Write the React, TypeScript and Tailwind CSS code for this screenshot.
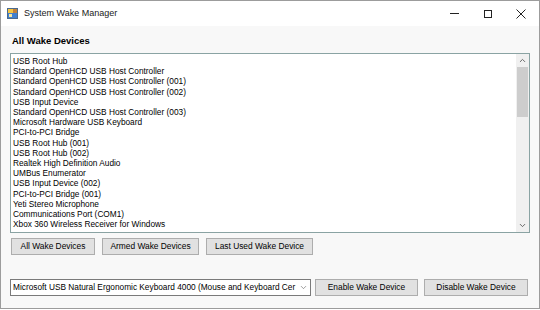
import { ChevronDown, ChevronUp } from "lucide-react";

const devices = [
  "USB Root Hub",
  "Standard OpenHCD USB Host Controller",
  "Standard OpenHCD USB Host Controller (001)",
  "Standard OpenHCD USB Host Controller (002)",
  "USB Input Device",
  "Standard OpenHCD USB Host Controller (003)",
  "Microsoft Hardware USB Keyboard",
  "PCI-to-PCI Bridge",
  "USB Root Hub (001)",
  "USB Root Hub (002)",
  "Realtek High Definition Audio",
  "UMBus Enumerator",
  "USB Input Device (002)",
  "PCI-to-PCI Bridge (001)",
  "Yeti Stereo Microphone",
  "Communications Port (COM1)",
  "Xbox 360 Wireless Receiver for Windows",
];

function Btn({ label, w }: { label: string; w: string }) {
  return (
    <button
      className={`${w} h-[17px] shrink-0 border border-[#adadad] bg-[#e1e1e1] text-[8.4px] leading-none text-black`}
    >
      {label}
    </button>
  );
}

function AppIcon() {
  return (
    <svg width="11" height="11" viewBox="0 0 11 11">
      <rect x="0.5" y="0.5" width="10" height="10" fill="#6a8fb8" stroke="#4a6a8e" />
      <rect x="1" y="1" width="5" height="4" fill="#f4c542" />
      <rect x="6" y="1" width="4" height="4" fill="#c0803a" />
      <rect x="1" y="5" width="9" height="5" fill="#3f7fd0" />
      <rect x="2" y="6" width="3" height="3" fill="#f6e7a0" />
    </svg>
  );
}

export default function App() {
  return (
    <div className="h-[310px] w-[540px] bg-white font-['Liberation_Sans',Arial,sans-serif] text-black">
      <div className="flex h-[309px] w-[540px] flex-col border border-[#9c9c9c] bg-white">
        {/* title bar */}
        <div className="flex h-[25px] shrink-0 items-center pl-[6px]">
          <AppIcon />
          <span className="ml-[6px] text-[9px] text-[#1a1a1a]">System Wake Manager</span>
          <div className="ml-auto flex items-center">
            <div className="flex w-[34px] justify-center">
              <div className="h-px w-[9px] bg-[#222]" />
            </div>
            <div className="flex w-[34px] justify-center">
              <div className="h-[8px] w-[8px] border border-[#222]" />
            </div>
            <div className="flex w-[34px] justify-center pr-[2px]">
              <svg width="10" height="10" viewBox="0 0 10 10">
                <path d="M0.5 0.5 L9.5 9.5 M9.5 0.5 L0.5 9.5" stroke="#222" strokeWidth="1" />
              </svg>
            </div>
          </div>
        </div>

        {/* client */}
        <div className="flex flex-1 flex-col bg-[#f8f8f8] px-[9px] pt-[9px]">
          <div className="pl-[2px] text-[9.5px] font-bold leading-[12px]">All Wake Devices</div>

          <div className="mt-[6px] flex h-[180px] border border-[#8aa3a3] bg-white">
            <div className="flex-1 overflow-hidden pl-[2px] pt-[2px]">
              {devices.map((d) => (
                <div key={d} className="whitespace-nowrap text-[8.3px] leading-[10.2px]">
                  {d}
                </div>
              ))}
            </div>
            <div className="flex w-[13px] flex-col bg-[#f0f0f0]">
              <div className="flex h-[13px] items-center justify-center text-[#606060]">
                <ChevronUp size={9} strokeWidth={2.5} />
              </div>
              <div className="mx-[1px] h-[50px] bg-[#cdcdcd]" />
              <div className="flex-1" />
              <div className="flex h-[13px] items-center justify-center text-[#606060]">
                <ChevronDown size={9} strokeWidth={2.5} />
              </div>
            </div>
          </div>

          <div className="mt-[5px] flex gap-[6px] pl-[1px]">
            <Btn label="All Wake Devices" w="w-[84px]" />
            <Btn label="Armed Wake Devices" w="w-[97px] ml-[1px]" />
            <Btn label="Last Used Wake Device" w="w-[107px] ml-[1px]" />
          </div>

          <div className="mt-[24px] flex items-center">
            <div className="flex h-[17px] w-[301px] items-center border border-[#7a7a7a] bg-white pl-[2px]">
              <span className="flex-1 whitespace-nowrap text-[8.3px] leading-none">
                Microsoft USB Natural Ergonomic Keyboard 4000 (Mouse and Keyboard Cer
              </span>
              <div className="flex w-[14px] shrink-0 justify-center text-[#555]">
                <ChevronDown size={9} strokeWidth={1.5} />
              </div>
            </div>
            <div className="ml-[4px] flex gap-[6px]">
              <Btn label="Enable Wake Device" w="w-[103px]" />
              <Btn label="Disable Wake Device" w="w-[104px]" />
            </div>
          </div>
        </div>
      </div>
    </div>
  );
}
